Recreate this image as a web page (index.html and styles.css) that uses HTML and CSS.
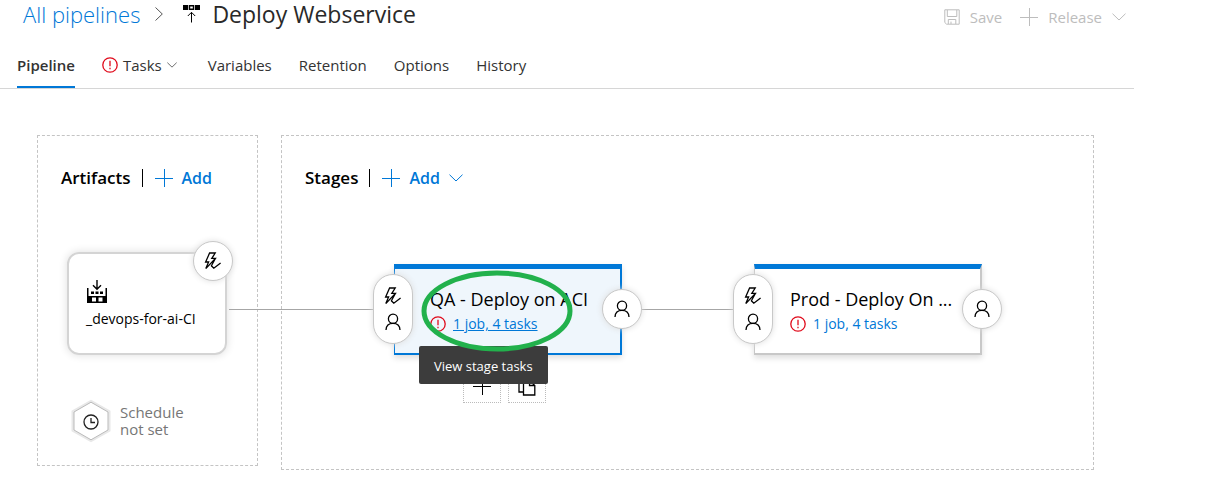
FILE: index.html
```html
<!DOCTYPE html>
<html lang="en">
<head>
<meta charset="utf-8">
<title>Deploy Webservice - Pipelines</title>
<link rel="stylesheet" href="styles.css">
</head>
<body>
<svg class="defs" aria-hidden="true">
  <symbol id="plus" viewBox="0 0 18 18"><path d="M0 9.5H18M9.5 0V18"/></symbol>
  <symbol id="chevron" viewBox="0 0 14 8"><path d="M.5 .7L7 7L13.5 .7"/></symbol>
  <symbol id="alert" viewBox="0 0 16 16"><circle cx="8" cy="8" r="7.2"/><path d="M8 3.8V9.2M8 10.8V12.2"/></symbol>
  <symbol id="person" viewBox="0 0 16 18"><circle cx="8" cy="5.8" r="4.6"/><path d="M1 17C1.2 12.8 4 10.4 8 10.4S14.8 12.8 15 17"/></symbol>
  <symbol id="trigger" viewBox="0 0 18 18"><path d="M5.6 1H11.2L7.8 6.4H11.4L1.8 16.6L4.6 10H1.6ZM11.4 6.4L7.4 13.8L9.8 16.2L16.6 11"/></symbol>
</svg>
<main class="page">
  <header class="topbar">
    <nav class="crumbs" aria-label="Breadcrumb">
      <a class="crumb-link" href="#">All pipelines</a>
      <svg class="icon crumb-sep" viewBox="0 0 8 14"><path d="M.5 .5L7.3 7L.5 13.5"/></svg>
      <svg class="icon release-icon" viewBox="0 0 17 18"><path class="solid" fill-rule="evenodd" d="M0 0H5V5H0ZM5.7 0H11.3V5H5.7ZM12 0H17V5H12ZM7.2 1.5V3.5H9.8V1.5Z"/><path d="M8.5 17.5V7.5M4.8 11L8.5 7.3L12.2 11"/></svg>
      <h1 class="title">Deploy Webservice</h1>
    </nav>
    <div class="actions">
      <button class="action" type="button" disabled><svg class="icon save-icon" viewBox="0 0 16 16"><path d="M1 .8H15.2V15.2H2.6L.8 13.5V.8ZM3.3 1V7.5H12.8V1M4.3 15V10.5H11.8V15M7 15V12.6"/></svg>Save</button>
      <button class="action" type="button" disabled><svg class="icon plus"><use href="#plus"/></svg>Release<svg class="icon chevron"><use href="#chevron"/></svg></button>
    </div>
  </header>
  <nav class="tabs" aria-label="Sections">
    <a class="tab active" href="#">Pipeline</a>
    <a class="tab tasks-tab" href="#"><svg class="icon alert"><use href="#alert"/></svg>Tasks<svg class="icon small-chevron"><use href="#chevron"/></svg></a>
    <a class="tab" href="#">Variables</a>
    <a class="tab" href="#">Retention</a>
    <a class="tab" href="#">Options</a>
    <a class="tab" href="#">History</a>
  </nav>
  <div class="canvas">
    <section class="panel artifacts">
      <div class="panel-head">
        <h2 class="panel-title">Artifacts</h2>
        <button class="add" type="button"><svg class="icon plus"><use href="#plus"/></svg>Add</button>
      </div>
      <div class="artifact">
        <svg class="icon build-icon" viewBox="0 0 20 23"><path d="M10 0V9M6 5.2L10 9.2L14 5.2"/><path class="solid" fill-rule="evenodd" d="M0 8H1.5V16H18.5V8H20V23H0ZM5 17.5V21.5H9V17.5ZM11.5 17.5V21.5H15.5V17.5ZM4 11.5H7V14H4ZM8.5 11.5H11.5V14H8.5ZM13 11.5H16V14H13Z"/></svg>
        <span>_devops-for-ai-CI</span>
        <button class="node-button artifact-trigger" type="button" aria-label="Continuous deployment trigger"><svg class="icon trigger"><use href="#trigger"/></svg></button>
      </div>
      <button class="schedule" type="button">
        <svg class="icon schedule-icon" viewBox="0 0 40 44"><path class="hex-halo" d="M20 3L37.5 13V31L20 41L2.5 31V13Z"/><path class="hex" d="M20 3.2L37 13V31L20 40.8L3 31V13Z"/><circle cx="20" cy="23" r="7"/><path d="M20 19V23.5H24"/></svg>
        <span>Schedule<br>not set</span>
      </button>
    </section>
    <section class="panel stages">
      <div class="panel-head">
        <h2 class="panel-title">Stages</h2>
        <button class="add" type="button"><svg class="icon plus"><use href="#plus"/></svg>Add<svg class="icon chevron"><use href="#chevron"/></svg></button>
      </div>
      <div class="stage-row">
        <article class="stage selected">
          <button class="node-button pre" type="button" aria-label="Pre-deployment conditions"><svg class="icon trigger"><use href="#trigger"/></svg><svg class="icon person"><use href="#person"/></svg></button>
          <h3 class="stage-name">QA - Deploy on ACI</h3>
          <div class="stage-tasks"><svg class="icon alert"><use href="#alert"/></svg><a class="task-link" href="#">1 job, 4 tasks</a></div>
          <button class="node-button post" type="button" aria-label="Post-deployment conditions"><svg class="icon person"><use href="#person"/></svg></button>
          <div class="stage-tools">
            <button class="tool" type="button" aria-label="Add stage"><svg class="icon plus"><use href="#plus"/></svg></button>
            <button class="tool" type="button" aria-label="Clone stage"><svg class="icon clone" viewBox="0 0 18 20"><path d="M5.5 16H1V1H7L10.5 4.5M5.5 4.5H11.5L16.8 9.5V19H5.5ZM11.5 4.5V9.5H16.8"/></svg></button>
          </div>
          <div class="tooltip" role="tooltip">View stage tasks</div>
          <svg class="highlight" viewBox="0 0 154 82"><ellipse cx="77" cy="41" rx="73" ry="38"/></svg>
        </article>
        <article class="stage">
          <button class="node-button pre" type="button" aria-label="Pre-deployment conditions"><svg class="icon trigger"><use href="#trigger"/></svg><svg class="icon person"><use href="#person"/></svg></button>
          <h3 class="stage-name">Prod - Deploy On ...</h3>
          <div class="stage-tasks"><svg class="icon alert"><use href="#alert"/></svg><a class="task-link" href="#">1 job, 4 tasks</a></div>
          <button class="node-button post" type="button" aria-label="Post-deployment conditions"><svg class="icon person"><use href="#person"/></svg></button>
        </article>
      </div>
    </section>
  </div>
</main>
</body>
</html>
```
FILE: styles.css
```css
* { box-sizing: border-box; }
body {
  margin: 0;
  background: #fff;
  color: #000;
  font: 15px/20px "Open Sans", "Noto Sans", sans-serif;
}
h1, h2, h3 { margin: 0; font-weight: 400; }
a { color: #0078d7; text-decoration: none; }
button { padding: 0; border: 0; background: none; font: inherit; color: inherit; }
.defs { display: none; }
.icon { flex: none; display: block; fill: none; stroke: currentColor; stroke-width: 1; overflow: visible; }
.solid { fill: currentColor; stroke: none; }
.plus { width: 18px; height: 18px; }
.chevron { width: 14px; height: 8px; }
.small-chevron { width: 10px; height: 6px; }
.alert { width: 16px; height: 16px; color: #e00b1c; stroke-width: 1.3; }
.person { width: 16px; height: 18px; stroke-width: 1.3; }
.trigger { width: 18px; height: 18px; stroke-width: 1.3; }

.page { margin-right: 85px; }
.topbar { display: flex; justify-content: space-between; padding: 0 8px 0 23px; }
.crumbs { display: flex; align-items: center; height: 28px; font-size: 22px; }
.crumb-link { font-weight: 300; }
.crumb-sep { width: 8px; height: 14px; margin: 0 20px 0 15px; color: #555; }
.release-icon { width: 17px; height: 18px; }
.title { margin-left: 12px; font-size: 23px; line-height: 28px; color: #292929; }
.actions { display: flex; gap: 18px; height: 34px; color: #bdbdbd; }
.action { display: flex; align-items: center; gap: 10px; }
.save-icon { width: 16px; height: 16px; }

.tabs { display: flex; gap: 27px; margin-top: 10px; padding-left: 17px; border-bottom: 1px solid #d6d6d6; }
.tab { display: flex; align-items: center; height: 44px; border-bottom: 2px solid transparent; color: #333; }
.tab.active { border-color: #0078d7; font-weight: 600; }
.tasks-tab { gap: 5px; margin-right: 4px; }

.canvas { display: flex; align-items: flex-start; gap: 23px; padding: 46px 40px 0 37px; }
.panel { border: 1px dashed #c4c4c4; }
.artifacts { width: 221px; padding: 28px 23px 22px; }
.stages { flex: 1; padding: 28px 23px 114px; }
.panel-head { display: flex; align-items: center; height: 28px; }
.panel-title { padding-right: 11px; font-size: 17px; font-weight: 600; }
.add { display: flex; align-items: center; gap: 9px; padding-left: 12px; border-left: 1px solid #000; color: #0078d7; font-size: 16px; font-weight: 600; line-height: 18px; }

.artifact {
  position: relative;
  display: flex;
  flex-direction: column;
  gap: 6px;
  width: 160px;
  height: 103px;
  margin: 60px 0 0 6px;
  padding: 26px 17px;
  border: 2px solid #d4d4d4;
  border-radius: 12px;
  box-shadow: 0 0 8px #ddd;
  font-size: 14px;
}
.build-icon { width: 20px; height: 23px; margin-left: 1px; stroke-width: 1.4; }
.node-button {
  position: absolute;
  z-index: 1;
  display: flex;
  flex-direction: column;
  align-items: center;
  justify-content: center;
  width: 40px;
  height: 40px;
  border: 1px solid #c8c8c8;
  border-radius: 20px;
  background: #fff;
  box-shadow: 0 0 6px #ddd;
}
.artifact-trigger { top: -13px; right: -8px; }
.schedule { display: flex; align-items: center; gap: 9px; margin: 44px 0 0 10px; color: #767676; line-height: 17px; text-align: left; }
.schedule-icon { width: 40px; height: 44px; color: #222; stroke-width: 1.3; }
.hex-halo { stroke: #e8e8e8; stroke-width: 4; }
.hex { fill: #fff; stroke: #bbb; stroke-width: 1; }

.stage-row { display: flex; gap: 132px; margin: 72px 0 0 89px; }
.stage {
  position: relative;
  width: 228px;
  height: 91px;
  padding: 20px 0 0 35px;
  border: 2px solid #c8c8c8;
  border-width: 5px 2px 2px 1px;
  border-top-color: #0078d7;
  box-shadow: 0 3px 6px #ddd;
}
.stage.selected { border-color: #0078d7; background: #eff6fc; }
.stage::before { content: ""; position: absolute; top: 40px; right: 100%; width: 132px; height: 1px; background: #a6a6a6; }
.stage.selected::before { width: 166px; }
.stage-name { font-size: 18px; line-height: 20px; white-space: nowrap; }
.stage-tasks { display: flex; align-items: center; gap: 7px; margin-top: 5px; font-size: 14px; }
.selected .task-link { text-decoration: underline; }
.pre { top: 5px; left: -22px; height: 70px; gap: 8px; }
.post { top: 20px; right: -22px; }
.stage-tools { position: absolute; top: 100%; left: 68px; display: flex; gap: 7px; margin-top: 12px; }
.tool { display: flex; align-items: center; justify-content: center; width: 38px; height: 38px; padding-top: 4px; border: 1px dotted #bbb; }
.clone { width: 18px; height: 20px; stroke-width: 1.3; }
.tooltip { position: absolute; z-index: 2; top: 77px; left: 24px; padding: 10px 15px 8px; border-radius: 2px; background: #3c3c3c; color: #fff; font-size: 13px; white-space: nowrap; }
.highlight { position: absolute; z-index: 3; top: 1px; left: 25px; width: 154px; height: 82px; fill: none; stroke: #22b14c; stroke-width: 5; pointer-events: none; }
```
